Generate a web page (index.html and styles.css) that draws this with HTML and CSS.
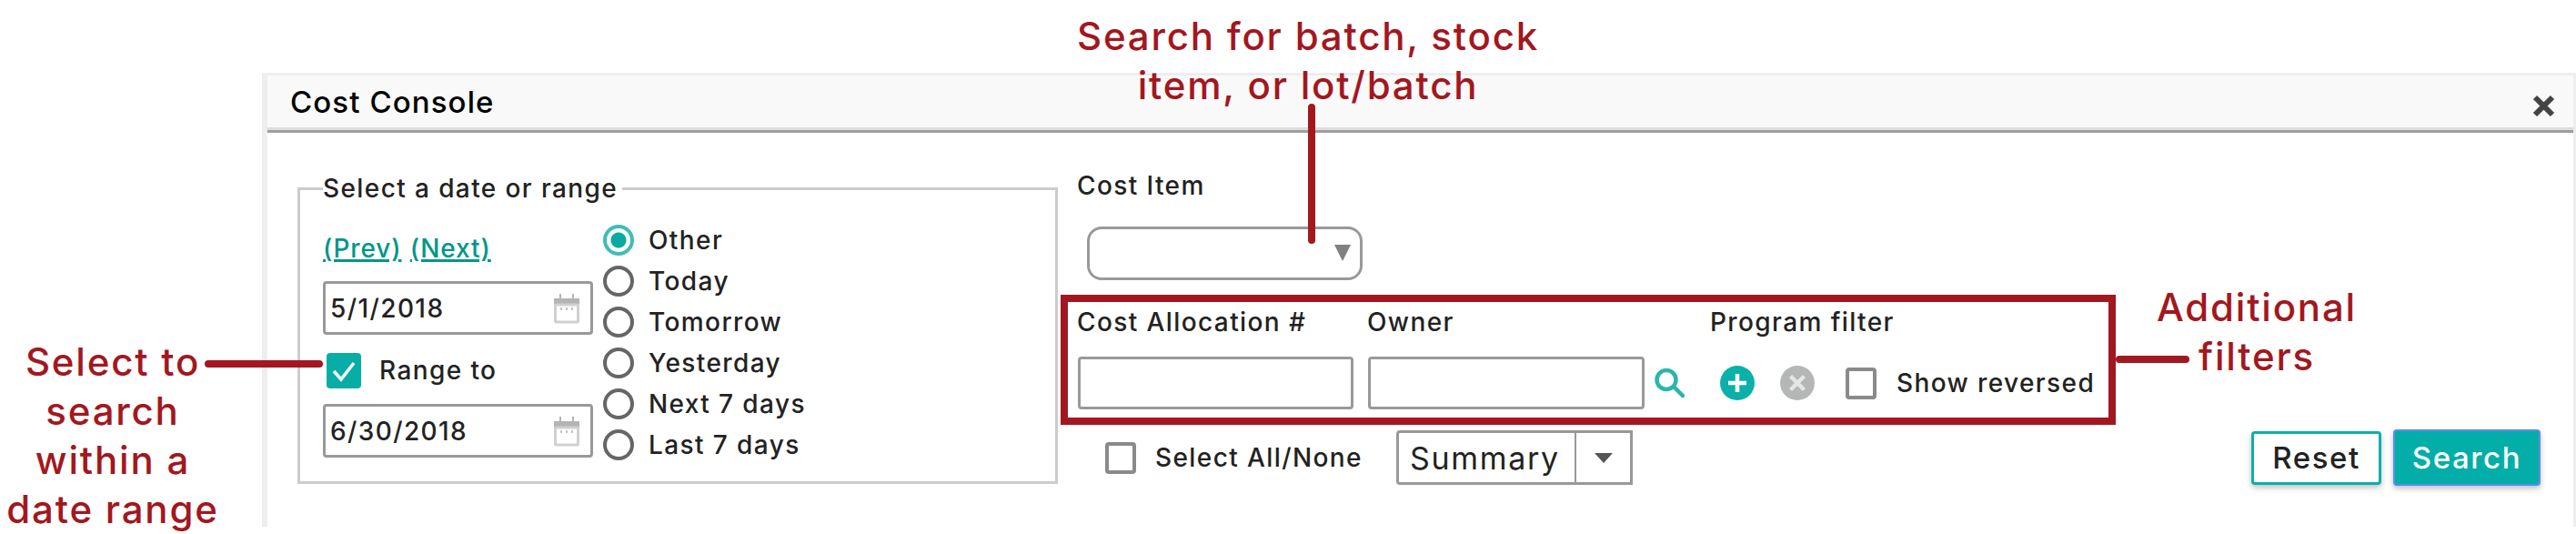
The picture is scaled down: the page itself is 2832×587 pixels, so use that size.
FILE: index.html
```html
<!doctype html>
<html lang="en">

<head>
  <meta charset="UTF-8" />
  <title>Cost Console</title>
  <link rel="stylesheet" href="styles.css">
</head>

<body>
  <div class="panel">
    <div class="panel-header">
      <h1 class="panel-title">Cost Console</h1>
      <svg class="close-icon" viewBox="0 0 25 25"><path d="M3 3 22 22M22 3 3 22" /></svg>
    </div>

    <div class="panel-body">
      <fieldset class="date-box">
        <legend class="date-legend">Select a date or range</legend>
        <div class="date-columns">
          <div class="date-left">
            <div class="nav-links"><a href="#">(Prev)</a> <a href="#">(Next)</a></div>
            <div class="date-field first">
              <input type="text" value="5/1/2018" />
              <svg class="cal-icon" viewBox="0 0 30 34">
                <path class="cal-head" d="M1 6h6V1h2v5h12V1h2v5h6v8H1z" />
                <rect class="cal-body" x="2.5" y="13" width="25" height="19" rx="1" />
                <path class="cal-dots" d="M8 16h2v3H8zM14 16h2v3h-2zM20 16h2v3h-2z" />
              </svg>
            </div>
            <div class="range-row">
              <span class="check checked">
                <svg viewBox="0 0 38 39"><path d="M8 20l8 9 14-18" /></svg>
              </span>
              <span class="range-label">Range to</span>
            </div>
            <div class="date-field second">
              <input type="text" value="6/30/2018" />
              <svg class="cal-icon" viewBox="0 0 30 34">
                <path class="cal-head" d="M1 6h6V1h2v5h12V1h2v5h6v8H1z" />
                <rect class="cal-body" x="2.5" y="13" width="25" height="19" rx="1" />
                <path class="cal-dots" d="M8 16h2v3H8zM14 16h2v3h-2zM20 16h2v3h-2z" />
              </svg>
            </div>
          </div>
          <ul class="radio-list">
            <li class="radio-row"><span class="radio selected"></span>Other</li>
            <li class="radio-row"><span class="radio"></span>Today</li>
            <li class="radio-row"><span class="radio"></span>Tomorrow</li>
            <li class="radio-row"><span class="radio"></span>Yesterday</li>
            <li class="radio-row"><span class="radio"></span>Next 7 days</li>
            <li class="radio-row"><span class="radio"></span>Last 7 days</li>
          </ul>
        </div>
      </fieldset>

      <div class="search-side">
        <div class="cost-item">
          <label class="field-label">Cost Item</label>
          <div class="cost-select"><span class="cost-arrow"></span></div>
        </div>

        <div class="filter-box">
          <label class="field-label">Cost Allocation #</label>
          <label class="field-label">Owner</label>
          <label class="field-label program-label">Program filter</label>
          <input type="text" class="text-input" />
          <input type="text" class="text-input wide" />
          <div class="filter-tools">
            <svg class="search-icon" viewBox="0 0 33 33">
              <circle cx="13" cy="12.5" r="10.5" />
              <path d="M21 20 31 30" />
            </svg>
            <svg class="add-icon" viewBox="0 0 38 38">
              <circle cx="19" cy="19" r="19" />
              <path d="M19 9v20M9 19h20" />
            </svg>
            <svg class="clear-icon" viewBox="0 0 38 38">
              <circle cx="19" cy="19" r="19" />
              <path d="M11.5 11.5 26.5 26.5M26.5 11.5 11.5 26.5" />
            </svg>
            <span class="check reversed-check"></span>
            <span class="reversed-label">Show reversed</span>
          </div>
        </div>

        <div class="action-row">
          <span class="check all-check"></span>
          <span class="all-label">Select All/None</span>
          <div class="summary-select">
            <span class="summary-text">Summary</span>
            <span class="summary-btn"><span class="summary-arrow"></span></span>
          </div>
          <div class="buttons">
            <button type="button" class="btn btn-reset">Reset</button>
            <button type="button" class="btn btn-search">Search</button>
          </div>
        </div>
      </div>
    </div>
  </div>

  <div class="note note-batch">Search for batch, stock<br />item, or lot/batch</div>
  <div class="note note-filters">Additional<br />filters</div>
  <div class="note note-range">Select to<br />search<br />within a<br />date range</div>
  <span class="connector conn-batch"></span>
  <span class="connector conn-filters"></span>
  <span class="connector conn-range"></span>
</body>

</html>
```

FILE: styles.css
```css
* {
  margin: 0;
  padding: 0;
  box-sizing: border-box;
}

html,
body {
  width: 2832px;
  height: 587px;
  overflow: hidden;
  background-color: white;
}

body {
  position: relative;
  font-family: 'Inter', sans-serif;
  font-size: 28px;
  font-weight: 500;
  line-height: 34px;
  letter-spacing: 1.4px;
  color: #222;
}

/* panel */
.panel {
  margin: 80px 0 0 288px;
  height: 499px;
  border-top: 3px solid #eee;
  border-left: 6px solid #eee;
  border-right: 3px solid #eee;
}

.panel-header {
  display: flex;
  justify-content: space-between;
  align-items: center;
  height: 63px;
  padding: 0 20px 0 25px;
  background-color: #f9f9f9;
  border-bottom: 3px solid #9e9e9e;
  box-shadow: inset 0 -3px 0 #ddd;
}

.panel-title {
  margin-top: -3px;
  font-size: 33px;
  font-weight: 500;
  letter-spacing: 1.1px;
  color: #000;
}

.close-icon {
  width: 25px;
  height: 25px;
  margin-top: 6px;
  fill: none;
  stroke: #444;
  stroke-width: 6;
}

.panel-body {
  display: flex;
  align-items: flex-start;
  padding: 41px 0 0 33px;
}

/* date range box */
.date-box {
  width: 836px;
  height: 342px;
  margin-top: 3px;
  padding: 0 0 0 25px;
  border: 3px solid #ccc;
}

.date-legend {
  margin-left: 0;
  padding: 0 5px 0 0;
}

.date-columns {
  display: flex;
  align-items: flex-start;
}

.date-left {
  width: 297px;
  padding-top: 32px;
}

.nav-links {
  height: 34px;
  letter-spacing: 0.9px;
  color: #00968a;
}

.nav-links a {
  color: #00968a;
  margin-right: 1px;
  text-decoration-thickness: 3px;
}

.date-field {
  display: flex;
  align-items: center;
  height: 59px;
  padding: 0 11px 0 5px;
  border: 3px solid #999;
  border-radius: 4px;
}

.date-field.first {
  margin-top: 19px;
}

.date-field.second {
  margin-top: 17px;
}

.date-field input {
  flex: 1;
  min-width: 0;
  border: none;
  outline: none;
  background: none;
  font: inherit;
  letter-spacing: inherit;
  color: #222;
}

.cal-icon {
  width: 30px;
  height: 34px;
}

.cal-head {
  fill: #b4b4b4;
}

.cal-body {
  fill: white;
  stroke: #d0d0d0;
  stroke-width: 3;
}

.cal-dots {
  fill: #c4c4c4;
}

.range-row {
  display: flex;
  align-items: center;
  margin-top: 20px;
  height: 39px;
  padding-left: 4px;
}

.check {
  display: block;
  flex: none;
  width: 34px;
  height: 35px;
  background-color: white;
  border: 4px solid #8a8a8a;
  border-radius: 4px;
}

.check.checked {
  width: 38px;
  height: 39px;
  background-color: #08aea6;
  border: none;
}

.check.checked svg {
  display: block;
  width: 38px;
  height: 39px;
  fill: none;
  stroke: white;
  stroke-width: 3.5;
}

.range-label {
  margin: -2px 0 0 20px;
}

.radio-list {
  list-style: none;
  margin: 17px 0 0 11px;
}

.radio-row {
  display: flex;
  align-items: center;
  height: 45px;
  white-space: nowrap;
}

.radio {
  width: 34px;
  height: 34px;
  margin-right: 16px;
  background-color: white;
  border: 4px solid #666;
  border-radius: 50%;
}

.radio.selected {
  border-color: #3fbdb6;
  background: radial-gradient(circle, #08aaa3 0 8px, white 9px);
}

/* right side */
.search-side {
  flex: 1;
  min-width: 0;
  padding-left: 3px;
}

.cost-item {
  padding-left: 18px;
}

.field-label {
  display: block;
  height: 34px;
  white-space: nowrap;
}

.cost-select {
  position: relative;
  width: 303px;
  height: 59px;
  margin: 28px 0 0 11px;
  border: 3px solid #999;
  border-radius: 16px;
}

.cost-arrow {
  position: absolute;
  right: 10px;
  top: 17px;
  border-left: 9px solid transparent;
  border-right: 9px solid transparent;
  border-top: 18px solid #808080;
}

.filter-box {
  display: grid;
  grid-template-columns: 319px 315px 1fr;
  grid-template-rows: 34px 58px;
  row-gap: 21px;
  align-items: start;
  width: 1160px;
  height: 143px;
  margin-top: 16px;
  padding: 5px 0 0 11px;
  border: 8px solid #a31720;
}

.filter-box .field-label {
  margin-left: -1px;
}

.filter-box .program-label {
  margin-left: 61px;
}

.text-input {
  width: 303px;
  height: 58px;
  border: 3px solid #999;
  border-radius: 4px;
  outline: none;
}

.text-input.wide {
  width: 304px;
}

.filter-tools {
  display: flex;
  align-items: center;
  height: 58px;
}

.search-icon {
  flex: none;
  width: 33px;
  height: 33px;
  fill: none;
  stroke: #2bb5ae;
  stroke-width: 4.5;
  stroke-linecap: round;
}

.add-icon,
.clear-icon {
  flex: none;
  width: 38px;
  height: 38px;
  fill: none;
  stroke: white;
  stroke-width: 4.5;
}

.add-icon {
  margin-left: 39px;
}

.add-icon circle {
  fill: #0bb0a8;
  stroke: none;
}

.clear-icon {
  margin-left: 28px;
}

.clear-icon path {
  stroke: #e4e6e6;
}

.clear-icon circle {
  fill: #b5b7b7;
  stroke: none;
}

.reversed-check {
  margin-left: 34px;
}

.reversed-label {
  margin-left: 22px;
  white-space: nowrap;
}

.action-row {
  display: flex;
  align-items: center;
  height: 60px;
  margin-top: 6px;
  padding: 0 36px 0 49px;
}

.all-label {
  flex: none;
  width: 230px;
  margin-left: 21px;
  white-space: nowrap;
}

.summary-select {
  display: flex;
  flex: none;
  width: 260px;
  height: 60px;
  margin-left: 35px;
  border: 3px solid #999;
  border-radius: 4px 0 0 4px;
}

.summary-text {
  flex: 1;
  padding-left: 12px;
  font-size: 34px;
  line-height: 56px;
  font-weight: 400;
  letter-spacing: 1.7px;
}

.summary-btn {
  display: flex;
  align-items: center;
  justify-content: center;
  width: 61px;
  border-left: 2px solid #999;
}

.summary-arrow {
  border-left: 10px solid transparent;
  border-right: 10px solid transparent;
  border-top: 11px solid #555;
}

.buttons {
  display: flex;
  align-items: center;
  gap: 13px;
  margin-left: auto;
}

.btn {
  font-family: inherit;
  font-size: 33px;
  font-weight: 500;
  letter-spacing: 1.6px;
  border-radius: 4px;
  box-shadow: 0 3px 6px rgba(0, 0, 0, 0.25);
}

.btn-reset {
  width: 143px;
  height: 59px;
  background-color: white;
  border: 3px solid #0bb0a8;
  color: #222;
}

.btn-search {
  width: 162px;
  height: 62px;
  background-color: #03aea8;
  border: 2px solid #5a8cf0;
  color: white;
}

/* annotations */
.note {
  position: absolute;
  font-size: 42px;
  line-height: 54px;
  letter-spacing: 1.8px;
  text-align: center;
  color: #a31720;
  white-space: nowrap;
}

.note-batch {
  left: 1138px;
  top: 13px;
  width: 600px;
}

.note-filters {
  left: 2331px;
  top: 311px;
  width: 300px;
}

.note-range {
  left: 0;
  top: 371px;
  width: 248px;
}

.connector {
  position: absolute;
  background-color: #a31720;
  border-radius: 4px;
}

.conn-batch {
  left: 1438px;
  top: 114px;
  width: 8px;
  height: 154px;
}

.conn-filters {
  left: 2326px;
  top: 391px;
  width: 81px;
  height: 8px;
}

.conn-range {
  left: 225px;
  top: 396px;
  width: 130px;
  height: 8px;
}
```
